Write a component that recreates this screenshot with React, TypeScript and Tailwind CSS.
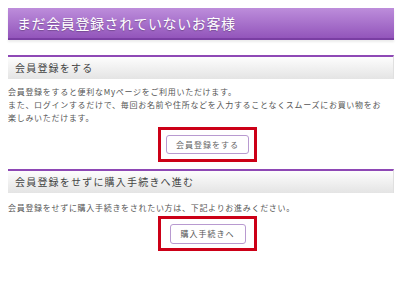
export default function App() {
  const font = { fontFamily: '"Noto Sans CJK JP", "Noto Sans", sans-serif' };
  return (
    <div className="w-[400px] h-[300px] bg-white overflow-hidden" style={font}>
      <div className="ml-2 w-[386px] pt-2">
        <div className="h-8 flex items-center pl-[9px] bg-gradient-to-b from-[#bd8ddb] to-[#9355bb] border-b-2 border-[#7a3ea3] shadow-[0_2px_2px_rgba(0,0,0,0.08)]">
          <span className="text-white text-[14px] tracking-[0.6px] leading-none [text-shadow:0_1px_1px_rgba(0,0,0,0.25)]">
            まだ会員登録されていないお客様
          </span>
        </div>

        <div className="mt-[15px] h-6 flex items-center pl-[7px] border-t-2 border-[#8e48b5] bg-gradient-to-b from-[#fdfdfd] to-[#e4e4e4] border-r border-r-[#e0e0e0]">
          <span className="text-[#444] text-[10px] tracking-[1.2px] leading-none">会員登録をする</span>
        </div>
        <div className="mt-[6px] text-[8px] leading-[13px] tracking-[0.7px] text-[#555]">
          <p>会員登録をすると便利なMyページをご利用いただけます。</p>
          <p>
            また、ログインするだけで、毎回お名前や住所などを入力することなくスムーズにお買い物をお
            <br />
            楽しみいただけます。
          </p>
        </div>
        <div className="flex justify-center mt-[3px] pl-[13px]">
          <div className="w-[99px] h-[35px] border-[3px] border-[#cc0017] flex items-center justify-center">
            <div className="w-[83px] h-[19px] border border-[#b89ad0] rounded-[3px] bg-white flex items-center justify-center text-[8px] tracking-[1px] text-[#666]">
              会員登録をする
            </div>
          </div>
        </div>

        <div className="mt-[7px] h-6 flex items-center pl-[7px] border-t-2 border-[#8e48b5] bg-gradient-to-b from-[#fdfdfd] to-[#e4e4e4] border-r border-r-[#e0e0e0]">
          <span className="text-[#444] text-[10px] tracking-[1.2px] leading-none">会員登録をせずに購入手続きへ進む</span>
        </div>
        <div className="mt-[8px] text-[8px] leading-[13px] tracking-[0.7px] text-[#555]">
          <p>会員登録をせずに購入手続きをされたい方は、下記よりお進みください。</p>
        </div>
        <div className="flex justify-center mt-[2px] pl-[13px]">
          <div className="w-[99px] h-[35px] border-[3px] border-[#cc0017] flex items-center justify-center">
            <div className="w-[76px] h-[20px] border border-[#b89ad0] rounded-[3px] bg-white flex items-center justify-center text-[8px] tracking-[1px] text-[#555]">
              購入手続きへ
            </div>
          </div>
        </div>
      </div>
    </div>
  );
}
